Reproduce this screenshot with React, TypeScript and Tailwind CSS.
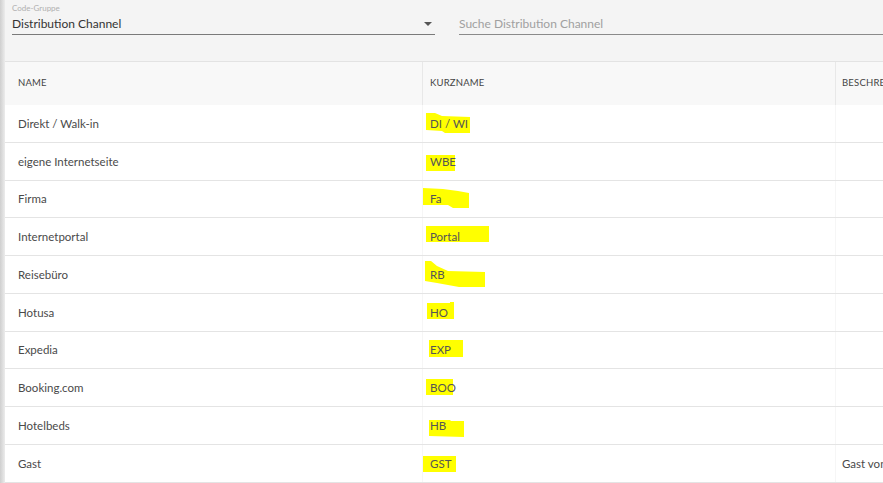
import { IoMdArrowDropdown } from "react-icons/io";

type Row = { name: string; code: string; desc?: string; mark: string };

// marker strokes, points relative to the KURZNAME cell
const rows: Row[] = [
  { name: "Direkt / Walk-in", code: "DI / WI", mark: "3,8 12,8 19,11 47,12 47,28 22,28 19,26 3,25" },
  { name: "eigene Internetseite", code: "WBE", mark: "3,12 32,12 32,28 3,28" },
  { name: "Firma", code: "Fa", mark: "0,7 20,8 35,10 46,12 46,27 30,27 25,24 0,24" },
  { name: "Internetportal", code: "Portal", mark: "3,8 66,8 66,24 3,24" },
  { name: "Reisebüro", code: "RB", mark: "2,5 8,5 14,10 25,15 62,16 62,31 36,31 25,29 14,27 2,25" },
  { name: "Hotusa", code: "HO", mark: "4,9 27,9 27,8 31,8 31,25 4,25" },
  { name: "Expedia", code: "EXP", mark: "6,8 40,8 40,25 6,25" },
  { name: "Booking.com", code: "BOO", mark: "3,10 30,10 30,26 3,26" },
  { name: "Hotelbeds", code: "HB", mark: "6,13 27,13 28,14 41,14 41,30 6,29" },
  { name: "Gast", code: "GST", desc: "Gast von", mark: "0,11 33,11 33,27 0,27" },
];

export default function App() {
  return (
    <div className="flex w-[883px] h-[483px] overflow-hidden bg-[#f4f4f4] font-['Lato',sans-serif] text-[#4a4a4a]">
      <div className="w-[5px] shrink-0 bg-gradient-to-r from-[#cfcfcf] to-[#ececec]" />
      <div className="flex flex-col flex-1 min-w-0">
        <div className="flex h-[62px] shrink-0 border-b border-[#e3e3e3]">
          <div className="ml-[7px] w-[423px] pt-[3px]">
            <div className="text-[8px] leading-[10px] text-[#b0b0b0]">Code-Gruppe</div>
            <div className="flex items-center justify-between h-[22px] border-b border-[#7a7a7a]">
              <span className="text-[12px] text-[#333]">Distribution Channel</span>
              <IoMdArrowDropdown className="w-[16px] h-[16px] text-[#555] mr-[-1px]" />
            </div>
          </div>
          <div className="ml-[24px] flex-1 pt-[13px]">
            <div className="flex items-center h-[22px] border-b border-[#8a8a8a]">
              <span className="text-[12px] text-[#a0a0a0]">Suche Distribution Channel</span>
            </div>
          </div>
        </div>
        <div className="flex h-[43px] shrink-0 bg-[#f8f8f8] text-[9.5px] text-[#444] tracking-[0.2px]">
          <div className="w-[418px] shrink-0 flex items-center pl-[13px] border-r border-[#e8e8e8]">NAME</div>
          <div className="w-[413px] shrink-0 flex items-center pl-[7px] border-r border-[#e8e8e8]">KURZNAME</div>
          <div className="flex-1 min-w-0 overflow-hidden flex items-center pl-[6px] whitespace-nowrap">BESCHREIBUNG</div>
        </div>
        <div className="flex flex-col bg-white text-[11.5px]">
          {rows.map((r) => (
            <div key={r.code} className="flex h-[37.75px] shrink-0 border-b border-[#e4e4e4]">
              <div className="w-[418px] shrink-0 flex items-center pl-[13px] border-r border-[#f6f6f6]">{r.name}</div>
              <div className="relative w-[413px] shrink-0 flex items-center pl-[7px] border-r border-[#f6f6f6]">
                <svg className="absolute left-0 top-0 w-[80px] h-[37px]" viewBox="0 0 80 37">
                  <polygon points={r.mark} fill="#ffff00" />
                </svg>
                <span className="relative text-[#555]">{r.code}</span>
              </div>
              <div className="flex-1 min-w-0 overflow-hidden flex items-center pl-[6px] whitespace-nowrap">{r.desc ?? ""}</div>
            </div>
          ))}
        </div>
      </div>
    </div>
  );
}
